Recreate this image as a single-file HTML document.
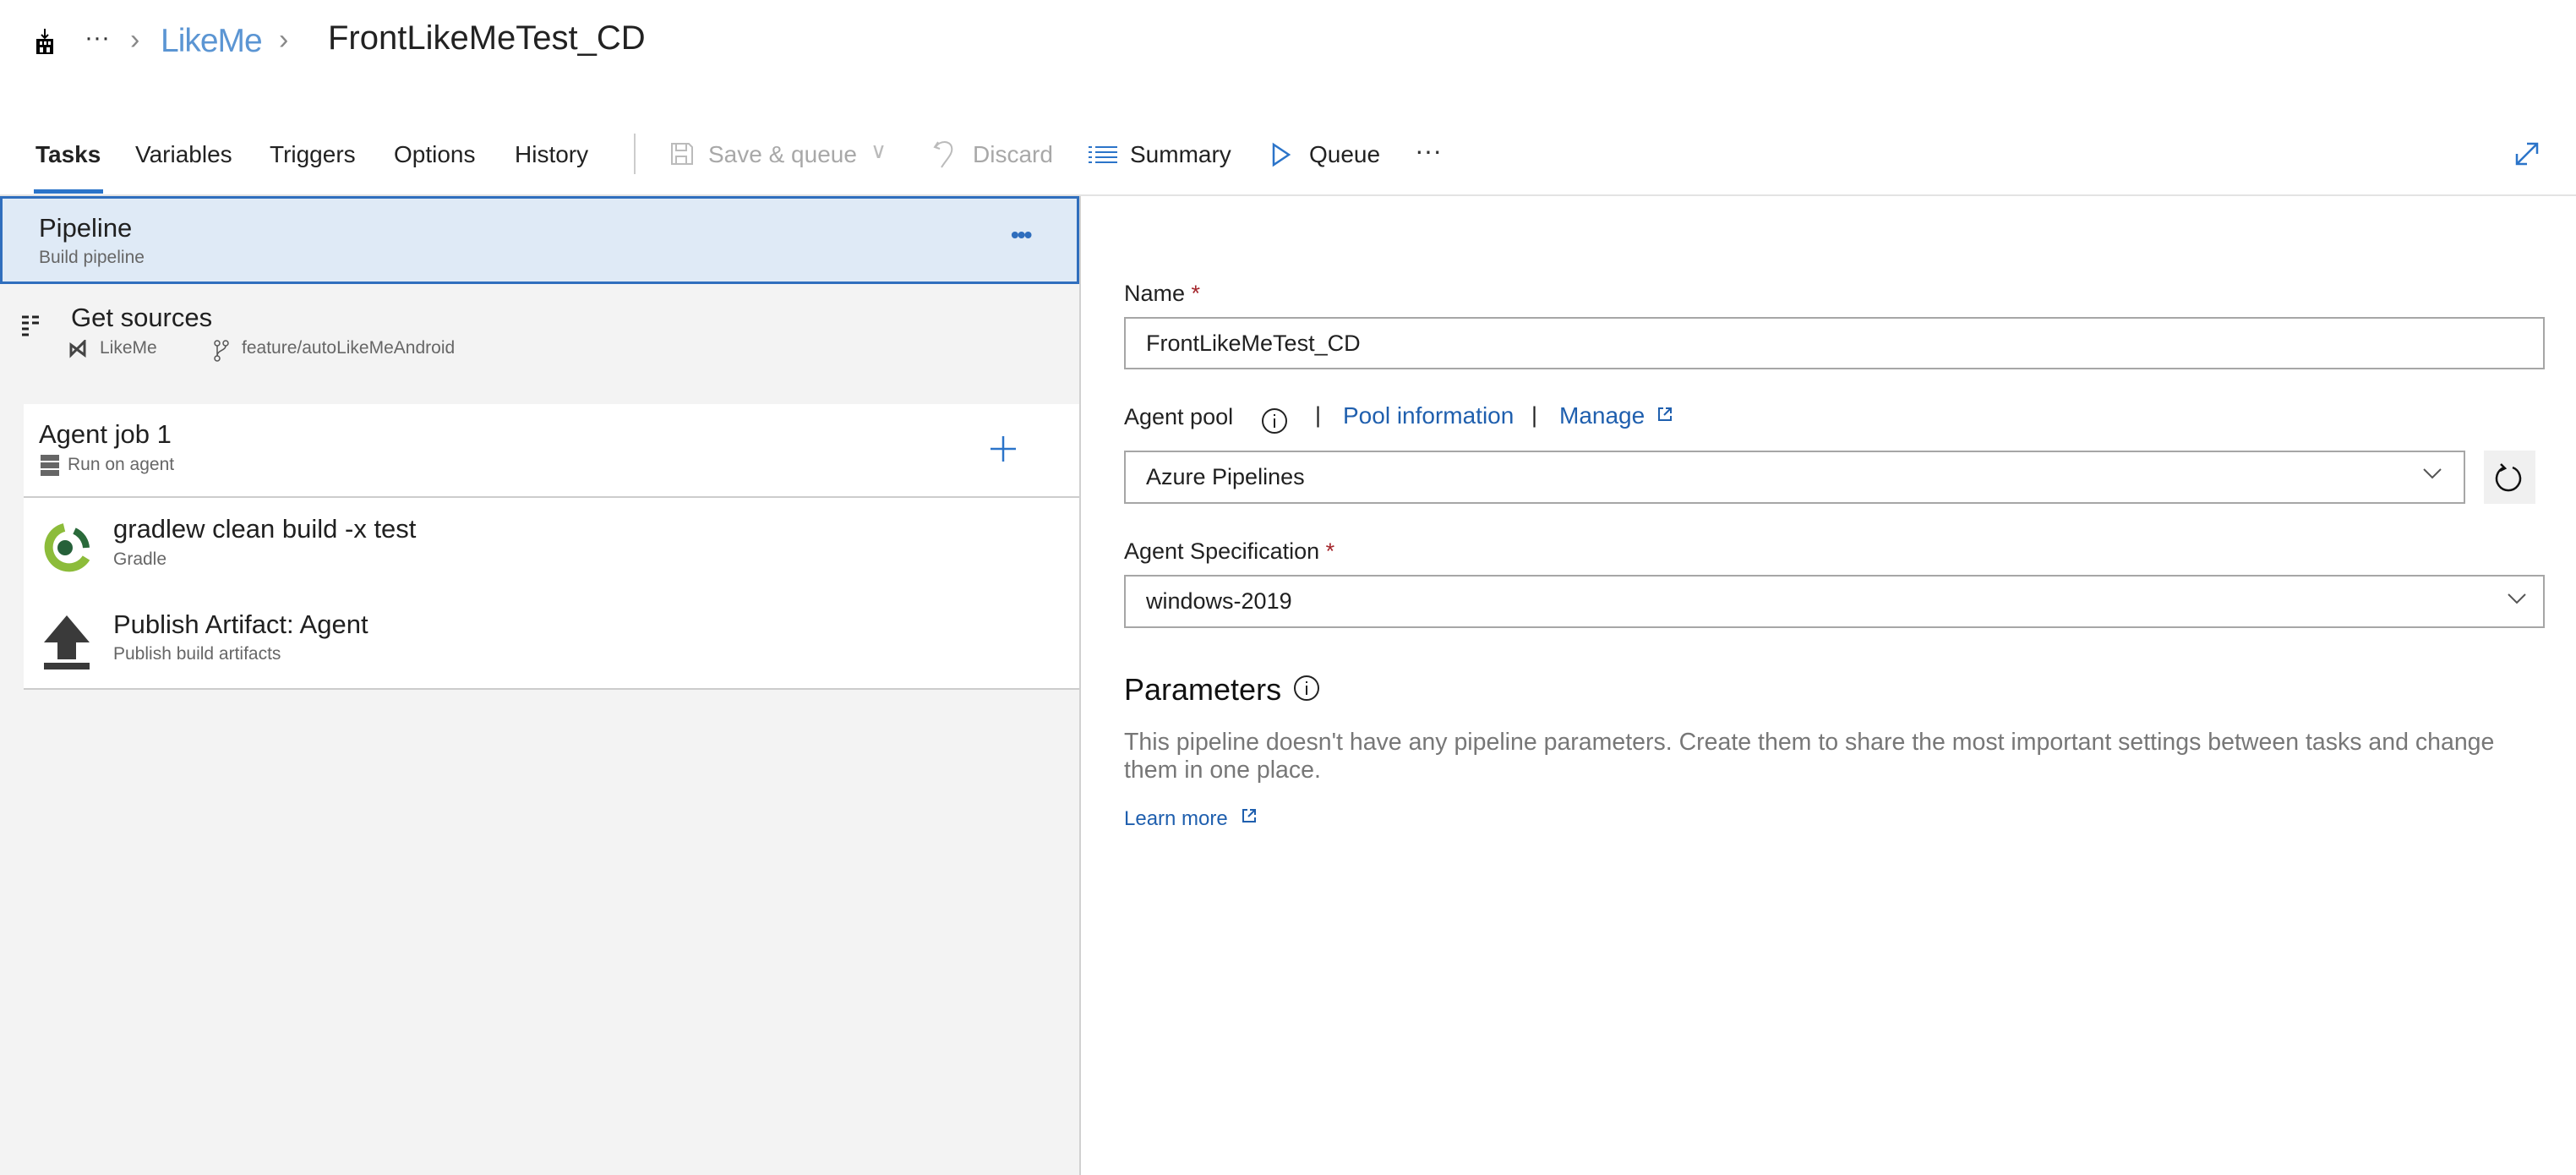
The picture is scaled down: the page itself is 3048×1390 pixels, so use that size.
<!DOCTYPE html>
<html><head><meta charset="utf-8"><style>
*{box-sizing:border-box;margin:0;padding:0}
body{width:3048px;height:1390px;overflow:hidden;background:#fff;font-family:"Liberation Sans",sans-serif;color:#202020;position:relative}
.a{position:absolute;white-space:nowrap}
.tab{font-size:28px;top:167px;color:#222}
.gray{color:#a8a8a8}
.lbl{font-size:27px;color:#222}
.inp{position:absolute;border:2px solid #a6a6a6;background:#fff;font-size:27px;padding-left:24px;display:flex;align-items:center}
.sub{font-size:21px;color:#666}
</style></head><body>
<!-- breadcrumb -->
<svg class="a" style="left:40px;top:34px" width="26" height="30" viewBox="0 0 26 30"><path d="M13 0v10M9 7l4 4 4-4" stroke="#000" stroke-width="2" fill="none"/><rect x="3" y="12" width="20" height="18" fill="#000"/><rect x="7" y="15" width="3" height="4" fill="#fff"/><rect x="12" y="15" width="3" height="4" fill="#fff"/><rect x="17" y="15" width="3" height="4" fill="#fff"/><rect x="7" y="22" width="4" height="6" fill="#fff"/><rect x="15" y="22" width="4" height="6" fill="#fff"/></svg>
<div class="a" style="left:100px;top:28px;font-size:30px;color:#333">···</div>
<div class="a" style="left:154px;top:28px;font-size:34px;color:#888">›</div>
<div class="a" style="left:190px;top:27px;font-size:39px;color:#5b95d3;letter-spacing:-1px">LikeMe</div>
<div class="a" style="left:330px;top:28px;font-size:34px;color:#888">›</div>
<div class="a" style="left:388px;top:23px;font-size:40px;color:#222">FrontLikeMeTest_CD</div>
<!-- tabs -->
<div class="a tab" style="left:42px;font-weight:bold">Tasks</div>
<div class="a" style="left:40px;top:224px;width:82px;height:5px;background:#2b74c9"></div>
<div class="a tab" style="left:160px">Variables</div>
<div class="a tab" style="left:319px">Triggers</div>
<div class="a tab" style="left:466px">Options</div>
<div class="a tab" style="left:609px">History</div>
<div class="a" style="left:750px;top:158px;width:2px;height:48px;background:#ccc"></div>
<svg class="a" style="left:793px;top:168px" width="28" height="28" viewBox="0 0 28 28"><path d="M2 2h20l4 4v20H2z M7 2v8h12V2 M7 26v-9h12v9" stroke="#bbb" stroke-width="2" fill="none"/></svg>
<div class="a tab gray" style="left:838px">Save &amp; queue</div>
<div class="a" style="left:1030px;top:163px;font-size:26px;color:#bbb">∨</div>
<svg class="a" style="left:1104px;top:164px" width="28" height="36" viewBox="0 0 28 36"><path d="M6 4l-4 6 6 2 M3 10C8 2 20 2 22 10 24 18 16 24 10 34" stroke="#bbb" stroke-width="2" fill="none"/></svg>
<div class="a tab gray" style="left:1151px">Discard</div>
<svg class="a" style="left:1288px;top:172px" width="34" height="24" viewBox="0 0 34 24"><g stroke="#2b74c9" stroke-width="2"><path d="M0 2h4M8 2h26M0 8h4M8 8h26M0 14h4M8 14h26M0 20h4M8 20h26"/></g></svg>
<div class="a tab" style="left:1337px">Summary</div>
<svg class="a" style="left:1504px;top:168px" width="24" height="30" viewBox="0 0 24 30"><path d="M3 3l18 12L3 27z" stroke="#2b74c9" stroke-width="2.5" fill="none"/></svg>
<div class="a tab" style="left:1549px">Queue</div>
<div class="a" style="left:1674px;top:160px;font-size:32px;color:#333">···</div>
<svg class="a" style="left:2974px;top:166px" width="32" height="32" viewBox="0 0 32 32"><path d="M4 28L28 4M16 4h12v12M4 16v12h12" stroke="#2b74c9" stroke-width="2.5" fill="none"/></svg>
<div class="a" style="left:0;top:230px;width:3048px;height:2px;background:#e3e3e3"></div>
<!-- left panel -->
<div class="a" style="left:0;top:232px;width:1279px;height:1158px;background:#f3f3f3;border-right:2px solid #d0d0d0"></div>
<div class="a" style="left:0;top:232px;width:1277px;height:104px;background:#dfeaf6;border:3px solid #2f6ebd"></div>
<div class="a" style="left:46px;top:252px;font-size:31px">Pipeline</div>
<div class="a sub" style="left:46px;top:293px">Build pipeline</div>
<div class="a" style="left:1196px;top:262px;font-size:28px;color:#2f6ebd;font-weight:bold;letter-spacing:-2px">•••</div>
<svg class="a" style="left:24px;top:372px" width="26" height="26" viewBox="0 0 26 26"><g stroke="#222" stroke-width="3"><path d="M2 3h8M14 3h8M2 10h8M14 10h8M2 17h8M2 24h8"/></g></svg>
<div class="a" style="left:84px;top:358px;font-size:31px">Get sources</div>
<svg class="a" style="left:82px;top:402px" width="28" height="24" viewBox="0 0 28 24"><path d="M2 6l16 12V2L2 18z" stroke="#444" stroke-width="3" fill="none"/></svg>
<div class="a sub" style="left:118px;top:400px">LikeMe</div>
<svg class="a" style="left:252px;top:402px" width="20" height="26" viewBox="0 0 20 26"><circle cx="5" cy="4" r="3" stroke="#555" stroke-width="1.5" fill="none"/><circle cx="15" cy="4" r="3" stroke="#555" stroke-width="1.5" fill="none"/><circle cx="5" cy="22" r="3" stroke="#555" stroke-width="1.5" fill="none"/><path d="M5 7v12M15 7c0 6-10 5-10 12" stroke="#555" stroke-width="1.5" fill="none"/></svg>
<div class="a sub" style="left:286px;top:400px">feature/autoLikeMeAndroid</div>
<div class="a" style="left:28px;top:478px;width:1249px;height:338px;background:#fff;border-bottom:2px solid #ccc"></div>
<div class="a" style="left:28px;top:587px;width:1249px;height:2px;background:#ccc"></div>
<div class="a" style="left:46px;top:496px;font-size:31px">Agent job 1</div>
<svg class="a" style="left:48px;top:538px" width="22" height="26" viewBox="0 0 22 26"><g fill="#666"><rect y="0" width="22" height="7"/><rect y="9" width="22" height="7"/><rect y="18" width="22" height="7"/></g></svg>
<div class="a sub" style="left:80px;top:538px">Run on agent</div>
<svg class="a" style="left:1170px;top:514px" width="34" height="34" viewBox="0 0 34 34"><path d="M17 2v30M2 17h30" stroke="#2b74c9" stroke-width="2.5"/></svg>
<svg class="a" style="left:48px;top:618px" width="60" height="60" viewBox="0 0 60 60"><path d="M28 6A24 24 0 1 0 54 42" stroke="#8cbc3a" stroke-width="10" fill="none"/><path d="M40 10A24 24 0 0 1 54 30" stroke="#2a6a3a" stroke-width="8" fill="none"/><circle cx="29" cy="30" r="9" fill="#26613a"/></svg>
<div class="a" style="left:134px;top:608px;font-size:31px">gradlew clean build -x test</div>
<div class="a sub" style="left:134px;top:650px">Gradle</div>
<svg class="a" style="left:50px;top:726px" width="58" height="66" viewBox="0 0 58 66"><path d="M29 2L2 34h16v20h22V34h16z" fill="#3a3a3a"/><rect x="2" y="58" width="54" height="8" fill="#3a3a3a"/></svg>
<div class="a" style="left:134px;top:721px;font-size:31px">Publish Artifact: Agent</div>
<div class="a sub" style="left:134px;top:762px">Publish build artifacts</div>
<!-- right -->
<div class="a lbl" style="left:1330px;top:332px">Name <span style="color:#a4262c">*</span></div>
<div class="inp" style="left:1330px;top:375px;width:1681px;height:62px">FrontLikeMeTest_CD</div>
<div class="a lbl" style="left:1330px;top:478px">Agent pool</div>
<svg class="a" style="left:1492px;top:482px" width="32" height="32" viewBox="0 0 32 32"><circle cx="16" cy="16" r="14" stroke="#222" stroke-width="2" fill="none"/><path d="M16 13v11M16 8v2" stroke="#222" stroke-width="2"/></svg>
<div class="a lbl" style="left:1556px;top:476px">|</div>
<div class="a" style="left:1589px;top:476px;font-size:28px;color:#1f5fae">Pool information</div>
<div class="a lbl" style="left:1812px;top:476px">|</div>
<div class="a" style="left:1845px;top:476px;font-size:28px;color:#1f5fae">Manage</div>
<svg class="a" style="left:1960px;top:480px" width="20" height="20" viewBox="0 0 20 20"><path d="M8 3H3v14h14v-5M11 3h6v6M17 3l-8 8" stroke="#1f5fae" stroke-width="2" fill="none"/></svg>
<div class="inp" style="left:1330px;top:533px;width:1587px;height:63px">Azure Pipelines</div>
<svg class="a" style="left:2866px;top:552px" width="24" height="16" viewBox="0 0 24 16"><path d="M2 3l10 10L22 3" stroke="#555" stroke-width="2" fill="none"/></svg>
<div class="a" style="left:2939px;top:533px;width:61px;height:63px;background:#f0f0f0"></div>
<svg class="a" style="left:2951px;top:545px" width="36" height="40" viewBox="0 0 36 40"><path d="M12 8A14 14 0 1 0 22 8" stroke="#111" stroke-width="2.5" fill="none"/><path d="M8 4l5 5-6 3" stroke="#111" stroke-width="2.5" fill="none"/></svg>
<div class="a lbl" style="left:1330px;top:637px">Agent Specification <span style="color:#a4262c">*</span></div>
<div class="inp" style="left:1330px;top:680px;width:1681px;height:63px">windows-2019</div>
<svg class="a" style="left:2966px;top:700px" width="24" height="16" viewBox="0 0 24 16"><path d="M2 3l10 10L22 3" stroke="#555" stroke-width="2" fill="none"/></svg>
<div class="a" style="left:1330px;top:795px;font-size:36px;color:#111">Parameters</div>
<svg class="a" style="left:1530px;top:798px" width="32" height="32" viewBox="0 0 32 32"><circle cx="16" cy="16" r="14" stroke="#222" stroke-width="2" fill="none"/><path d="M16 13v11M16 8v2" stroke="#222" stroke-width="2"/></svg>
<div class="a" style="left:1330px;top:862px;font-size:28.5px;color:#777;line-height:33px;white-space:normal;width:1680px">This pipeline doesn't have any pipeline parameters. Create them to share the most important settings between tasks and change them in one place.</div>
<div class="a" style="left:1330px;top:955px;font-size:24px;color:#1f5fae">Learn more</div>
<svg class="a" style="left:1468px;top:955px" width="20" height="20" viewBox="0 0 20 20"><path d="M8 3H3v14h14v-5M11 3h6v6M17 3l-8 8" stroke="#1f5fae" stroke-width="2" fill="none"/></svg>
</body></html>
